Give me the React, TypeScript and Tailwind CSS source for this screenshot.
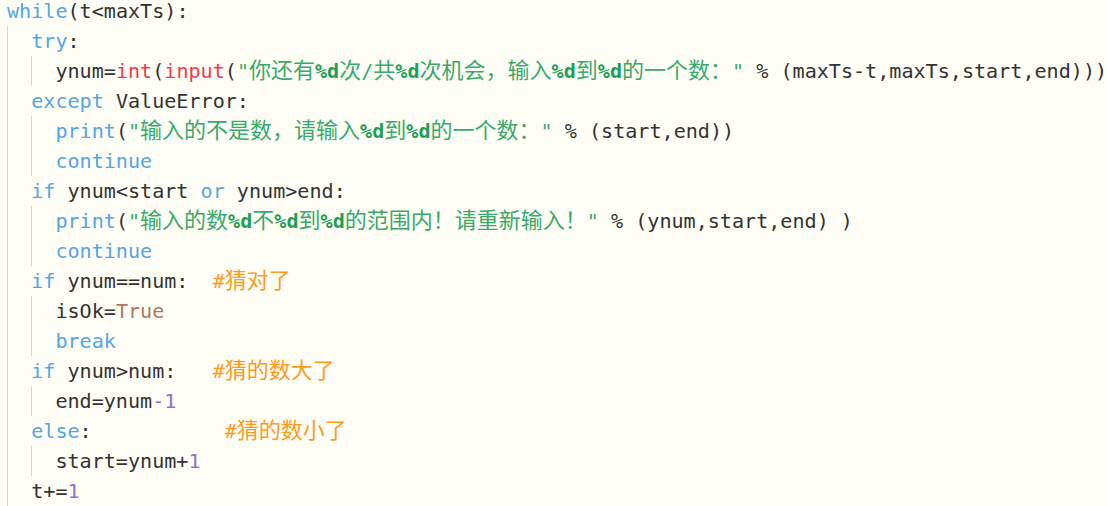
import React from "react";

type Tok = [string, string];
type Line = { level: number; tokens: Tok[] };

const lines: Line[] = [
  { level: 0, tokens: [["while", "k"], ["(t<maxTs):", "t"]] },
  { level: 1, tokens: [["try", "k"], [":", "t"]] },
  {
    level: 2,
    tokens: [
      ["ynum=", "t"],
      ["int", "f"],
      ["(", "t"],
      ["input", "f"],
      ["(", "t"],
      ['"你还有%d次/共%d次机会，输入%d到%d的一个数："', "s"],
      [" % (maxTs-t,maxTs,start,end)))", "t"],
    ],
  },
  { level: 1, tokens: [["except", "k"], [" ValueError:", "t"]] },
  {
    level: 2,
    tokens: [
      ["print", "k"],
      ["(", "t"],
      ['"输入的不是数，请输入%d到%d的一个数："', "s"],
      [" % (start,end))", "t"],
    ],
  },
  { level: 2, tokens: [["continue", "k"]] },
  {
    level: 1,
    tokens: [
      ["if", "k"],
      [" ynum<start ", "t"],
      ["or", "k"],
      [" ynum>end:", "t"],
    ],
  },
  {
    level: 2,
    tokens: [
      ["print", "k"],
      ["(", "t"],
      ['"输入的数%d不%d到%d的范围内！请重新输入！"', "s"],
      [" % (ynum,start,end) )", "t"],
    ],
  },
  { level: 2, tokens: [["continue", "k"]] },
  {
    level: 1,
    tokens: [
      ["if", "k"],
      [" ynum==num:  ", "t"],
      ["#猜对了", "c"],
    ],
  },
  { level: 2, tokens: [["isOk=", "t"], ["True", "b"]] },
  { level: 2, tokens: [["break", "k"]] },
  {
    level: 1,
    tokens: [
      ["if", "k"],
      [" ynum>num:   ", "t"],
      ["#猜的数大了", "c"],
    ],
  },
  { level: 2, tokens: [["end=ynum", "t"], ["-1", "n"]] },
  {
    level: 1,
    tokens: [
      ["else", "k"],
      [":           ", "t"],
      ["#猜的数小了", "c"],
    ],
  },
  { level: 2, tokens: [["start=ynum+", "t"], ["1", "n"]] },
  { level: 1, tokens: [["t+=", "t"], ["1", "n"]] },
];

const colorOf: Record<string, string> = {
  k: "text-[#55a5e4]",
  f: "text-[#f23c4e]",
  t: "text-[#333333]",
  s: "text-[#3aa96b]",
  c: "text-[#ff9a1f]",
  b: "text-[#a97b64]",
  n: "text-[#8b72d6]",
};

const CJK = /[\u3000-\u9fff\uff00-\uffef]/;

function Segment({ text, type }: { text: string; type: string }) {
  const parts =
    text.match(/[\u3000-\u9fff\uff00-\uffef]+|%d|[^\u3000-\u9fff\uff00-\uffef%]+|%/g) || [];
  return (
    <>
      {parts.map((p, i) => {
        if (CJK.test(p)) {
          return (
            <span
              key={i}
              className={`font-['Noto_Sans_CJK_SC',sans-serif] text-[22px] leading-none ${colorOf[type]}`}
            >
              {p}
            </span>
          );
        }
        if (type === "s" && p === "%d") {
          return (
            <span key={i} className="font-bold text-[#1e9f55]">
              {p}
            </span>
          );
        }
        return (
          <span key={i} className={colorOf[type]}>
            {p}
          </span>
        );
      })}
    </>
  );
}

export default function App() {
  return (
    <div className="w-[1107px] h-[506px] overflow-hidden bg-[#fefef6]">
      <div className="mt-[-4px] pl-[7px] font-['DejaVu_Sans_Mono',monospace] text-[20.1px] text-[#333333]">
        {lines.map((line, li) => (
          <div key={li} className="flex h-[30px]">
            {Array.from({ length: line.level }).map((_, gi) => (
              <span
                key={gi}
                className="block w-[24.2px] h-[30px] shrink-0 border-l border-[#d6d6d6]"
              />
            ))}
            <span className="block whitespace-pre leading-[30px]">
              {line.tokens.map((t, ti) => (
                <Segment key={ti} text={t[0]} type={t[1]} />
              ))}
            </span>
          </div>
        ))}
      </div>
    </div>
  );
}
